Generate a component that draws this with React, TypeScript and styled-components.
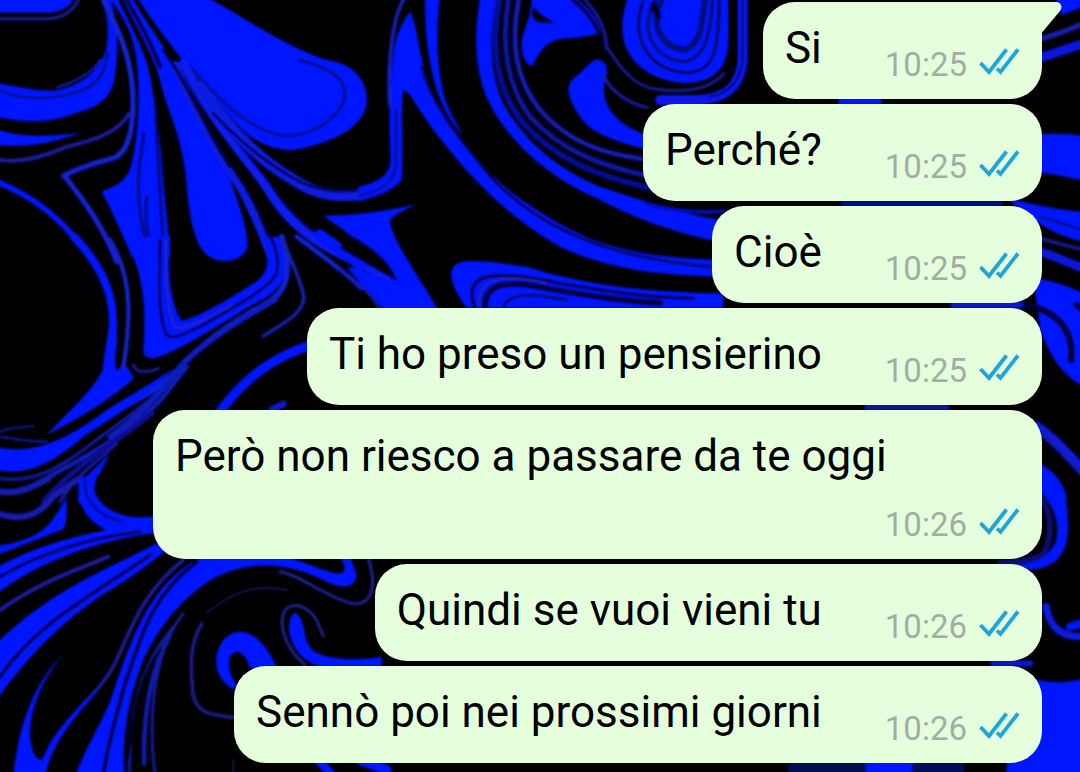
import React from 'react';
import styled, { createGlobalStyle } from 'styled-components';

const GlobalStyle = createGlobalStyle`
  * { box-sizing: border-box; }
  body { margin: 0; background: #000; font-family: Roboto, "Liberation Sans", sans-serif; }
`;

const Screen = styled.main`
  display: grid;
  grid-template-columns: minmax(0, 1fr);
  min-height: 100vh;
  overflow: hidden;
`;

const Art = styled.svg`
  grid-area: 1 / 1;
  width: 100%;
  height: 100%;
  display: block;
`;

const Messages = styled.ol`
  grid-area: 1 / 1;
  z-index: 1;
  margin: 0;
  padding: 2px 38px 8px 153px;
  list-style: none;
  display: flex;
  flex-direction: column;
  align-items: flex-end;
  gap: 5px;
`;

const Bubble = styled.li<{ $tail?: boolean }>`
  position: relative;
  display: flex;
  flex-wrap: wrap;
  align-items: flex-end;
  column-gap: 63px;
  max-width: 100%;
  padding: 20px 22px 8px 22px;
  border-radius: 32px;
  border-top-right-radius: ${(p) => (p.$tail ? '0' : '32px')};
  background: #e5ffdc;
`;

const Tail = styled.svg`
  position: absolute;
  top: 0;
  left: calc(100% - 1px);
  width: 21px;
  height: 31px;
`;

const Text = styled.p`
  margin: 0;
  padding-bottom: 17px;
  color: #000;
  font-size: 44px;
  line-height: 52px;
`;

const Meta = styled.div`
  display: flex;
  align-items: center;
  gap: 11px;
  height: 52px;
  margin-left: auto;
`;

const Time = styled.time`
  color: #a3aca5;
  font-size: 33px;
  line-height: 52px;
`;

const Ticks = styled.svg`
  width: 42px;
  height: 30px;
  margin-bottom: 8px;
`;

const BLUE = '#0318ff';
const DIM = '#1a1c9e';

type Mark = [d: string, width?: number, color?: string];

/* A mark without a width is a filled shape; with a width it is a strand. */
const Marks = ({ x, y, marks }: { x: number; y: number; marks: Mark[] }) => (
  <g transform={`translate(${x} ${y}) scale(0.33333)`}>
    {marks.map(([d, width, color = BLUE], i) =>
      width ? (
        <path key={i} d={d} fill="none" stroke={color} strokeWidth={width} strokeLinecap="round" />
      ) : (
        <path key={i} d={d} fill={color} />
      ),
    )}
  </g>
);

const topLeft: Mark[] = [
  ['M-20 -20H225C222 14 190 36 150 38H-20Z'],
  ['M0 56H130C180 58 215 40 235 0', 9, DIM],
  ['M-10 248C60 262 110 272 160 272C240 262 295 215 318 150C330 90 322 40 300 -10H330C352 60 357 150 345 230C335 290 300 320 240 335C160 368 80 372 -10 350Z'],
  ['M0 272C70 306 190 300 265 262C300 240 318 205 322 160', 8, '#000a70'],
  ['M170 262C230 245 280 215 300 180', 7, DIM],
  ['M-10 388C70 415 150 408 240 398C170 425 90 445 -10 434Z'],
  ['M0 480C60 488 120 475 200 440C300 418 360 390 388 340', 12, DIM],
  ['M-10 545C100 590 185 650 285 790', 17],
  ['M350 785C315 690 260 610 192 527C250 495 310 485 350 470C398 440 402 350 398 270C390 160 355 90 310 0', 16, '#1220d0'],
  ['M325 -10C380 60 405 120 412 200C420 300 415 400 395 490C385 530 370 550 305 575C340 640 370 710 395 770H512C506 700 490 560 482 450C470 350 455 220 435 170C410 110 380 50 350 -10Z'],
  ['M432 400C415 500 400 600 445 750M440 590C435 640 440 700 460 770M468 330C470 480 488 640 492 800', 8, '#00064a'],
  ['M365 -10H395C450 90 520 170 560 260C600 360 650 450 690 540C720 620 745 690 742 745C720 795 635 800 600 740C560 660 565 560 550 480C530 370 500 330 480 240C465 180 420 100 365 -10Z'],
  ['M375 -10C430 90 455 130 480 200', 12, '#000'],
  ['M410 -10H620C760 70 860 140 980 180C1060 190 1101 240 1101 300C1098 380 1000 430 880 450C800 450 745 412 700 360C620 265 520 160 410 -10Z'],
  ['M560 190C640 275 720 380 850 408C940 408 1030 350 1035 280C1030 230 990 205 900 180', 9, '#000a80'],
  ['M525 195C590 340 660 480 720 560C765 640 790 710 812 770', 24, '#0d1be0'],
  ['M545 210C610 350 670 470 735 560C780 640 808 700 828 760', 6, '#000430'],
  ['M550 190C640 370 730 460 800 560C850 650 930 730 1085 790L1230 870L1290 950', 28, '#0b1af0'],
  ['M600 270C680 400 760 480 810 550C870 650 950 710 1085 790', 6, '#000550'],
  ['M600 260C700 410 800 495 890 545C960 590 1020 590 1090 582', 34, '#0f1be0'],
  ['M640 340C740 450 850 520 900 545C980 580 1040 575 1090 570', 8, '#00033a'],
  ['M490 150C570 260 610 380 690 500', 9, '#00021c'],
];

const topMiddle: Mark[] = [
  ['M150 35C168 60 175 150 200 230C230 330 290 400 350 480C430 570 560 660 700 720C850 770 950 775 1090 780V830C900 825 750 810 600 740C480 670 400 600 310 500C240 420 190 350 150 285L130 268C120 350 132 450 125 540C90 580 40 590 -5 605V560C50 548 88 530 92 480C86 380 85 250 105 130Q120 70 150 35Z'],
  ['M135 -10C85 70 84 250 90 320', 11, '#1723c0'],
  ['M0 588C60 570 105 550 108 490V330', 7, '#000a78'],
  ['M195 -10H240C225 100 232 200 252 290C270 340 290 370 310 405C240 340 192 200 195 -10Z'],
  ['M185 200C220 330 320 440 400 540C520 660 700 770 1050 800', 8, '#00053a'],
  ['M360 -10H410C385 120 390 230 435 320C500 430 600 510 720 560C850 600 950 640 1090 660V728C900 690 800 640 700 590C540 520 400 380 365 250C343 170 345 80 360 -10Z'],
  ['M418 0C392 140 410 270 490 370C580 470 700 530 900 570', 18, '#000c98'],
  ['M445 0C420 150 445 260 510 350C600 450 720 500 900 535', 15, '#0c17a8'],
  ['M476 0C450 140 470 240 540 330C620 420 720 465 880 480', 14, '#131db8'],
  ['M460 0C437 150 455 250 525 340C610 435 720 485 880 508', 5, '#000'],
  ['M515 -10C515 60 482 100 486 130C480 165 500 195 515 200C540 150 565 122 600 117C660 112 700 105 725 98C715 60 690 20 640 -10Z'],
  ['M522 20C535 38 560 55 590 70L535 68C515 55 510 40 522 20Z', undefined, '#000'],
  ['M640 0C690 40 720 90 735 150', 12, '#00052a'],
  ['M675 0C715 40 738 90 740 140C790 220 830 260 890 268C970 278 1050 270 1092 220', 9, DIM],
  ['M710 178C740 180 750 210 735 240C720 300 755 370 860 405V448C770 425 690 400 660 350C620 290 608 250 660 220Q690 185 710 178Z'],
  ['M730 225C750 270 800 310 860 322', 10, DIM],
  ['M805 -10C750 130 820 238 980 250C1070 245 1105 195 1105 120V-10Z'],
  ['M850 0C810 110 860 210 980 218C1060 215 1075 160 1078 0', 9, '#00063a'],
  ['M885 0C835 90 880 175 970 185C1035 175 1050 110 1058 0', 9, '#000747'],
  ['M905 0C865 80 910 140 970 150C1020 140 1025 80 1035 0', 18, '#000c70'],
  ['M880 15L895 50', 18, '#00021a'],
  ['M918 -10C905 70 935 118 965 115C1000 105 1010 60 1015 -10Z'],
  ['M1148 0V180C1140 265 1090 300 1000 300H900', 30, '#0818f0'],
  ['M1148 0V180C1140 240 1110 280 1050 290', 6, '#000a70'],
  ['M-110 648C-50 645 60 640 165 612C125 640 88 645 90 670C110 740 170 820 235 930H70C40 890 0 850 -40 800C0 800 50 830 100 850C60 780 0 720 -110 648Z'],
  ['M-40 700C40 740 95 790 110 842C60 815 0 780 -60 745Z', undefined, '#000'],
  ['M-60 810C0 850 40 890 60 930', 8, '#151fa8'],
  ['M280 800C300 770 400 785 500 800C650 845 800 875 1090 880V925H320C290 880 260 830 280 800Z'],
  ['M345 925C310 830 370 800 600 850C750 875 850 892 1000 895', 10, '#00022a'],
  ['M375 925C370 845 450 840 560 865C700 890 800 905 900 908', 18, '#000330'],
  ['M360 925C345 830 430 820 560 848', 5, '#2a2a98'],
  ['M430 925C440 875 520 880 620 900', 7, '#00021c'],
  ['M860 610C930 630 1010 640 1090 634', 12, '#000bb8'],
];

const middleLeft: Mark[] = [
  ['M370 -10H512C498 100 515 200 545 242C600 230 700 170 775 120Q822 80 790 -10H835C872 70 862 130 800 172C700 222 600 300 480 350Q428 365 430 330C440 200 430 90 370 -10Z'],
  ['M480 0C480 120 470 220 500 285C520 300 560 280 610 255C700 200 800 150 828 105C840 70 830 30 812 -10', 9, '#00063a'],
  ['M498 0C495 120 500 215 525 262C560 270 620 235 700 195', 5, '#2b2b9a'],
  ['M0 715C100 730 180 685 290 600C370 540 430 500 480 450L560 360', 10, '#1219a0'],
  ['M0 752C80 765 140 710 220 670C330 610 430 540 490 470L560 380', 14, '#101bb8'],
  ['M130 785C230 670 360 600 455 520', 16, '#0a1190'],
  ['M845 -10C880 100 860 160 790 195C690 250 610 310 550 370C500 430 450 460 370 500', 17, '#1020d8'],
  ['M825 180C720 240 620 300 540 380C480 460 430 520 330 590', 16, '#101bc0'],
  ['M222 -10C325 100 350 190 336 310', 24],
  ['M336 300L324 385', 32],
  ['M348 230C352 300 340 350 350 395L372 365L402 415C360 455 270 520 140 585C210 510 280 450 308 390C320 340 322 280 330 230Z'],
  ['M330 0C385 90 400 200 370 380', 13, '#1320c8'],
  ['M400 375C410 400 440 400 475 385', 9, DIM],
  ['M-10 622C100 645 200 600 320 510C400 460 440 440 520 385C440 475 340 530 250 590C170 660 90 710 -10 690Z'],
  ['M0 575C30 560 60 565 100 558M0 590C50 600 90 605 140 605', 8, '#10158a'],
  ['M180 785C240 690 300 660 350 610', 10, '#1219a0'],
  ['M235 790C230 730 260 710 330 640L300 700C270 730 275 760 285 790Z'],
  ['M890 -10C970 50 1030 90 1085 145', 14, '#1020d8'],
  ['M960 -15L1085 75', 34],
  ['M925 318C810 355 725 425 660 515', 28],
  ['M790 288C850 250 905 225 912 175C905 120 870 60 850 0', 11, '#1920a8'],
  ['M815 510L850 492', 20, '#0c18d0'],
];

const bottomLeft: Mark[] = [
  ['M238 -10C222 80 270 130 330 155L465 145V108C380 125 300 90 282 30L290 -10Z'],
  ['M255 0C250 60 290 110 370 125', 8, '#000a80'],
  ['M198 50C203 90 200 135 190 148C130 170 60 200 -10 225V198C60 190 120 165 148 130C165 110 180 90 198 50Z'],
  ['M0 102C80 130 130 90 160 50L230 0', 18, '#141db0'],
  ['M0 40C60 50 110 20 150 0', 9, DIM],
  ['M-10 262C120 190 280 150 470 125V158C300 180 120 240 -10 342Z'],
  ['M0 290C120 220 260 175 420 155', 10, '#000640'],
  ['M0 390C120 305 220 275 325 230', 12, '#201fa0'],
  ['M470 190C330 265 150 330 -10 490V660C60 560 170 430 330 330C400 290 450 250 500 210Z'],
  ['M0 590C110 430 270 350 450 225', 11, '#000538'],
  ['M610 228C440 310 390 500 345 620C320 710 260 790 225 890H372C365 760 390 640 430 540C480 430 560 340 650 290C760 240 850 250 950 290C1020 330 1065 330 1070 285L1050 228H1015C1045 260 1040 290 1000 278C940 262 900 240 850 228Z'],
  ['M590 245C440 360 420 490 375 610C350 710 320 800 310 885', 12, '#00022c'],
  ['M550 240C420 340 385 470 345 550C300 640 215 690 150 800', 11, '#1a1d98'],
  ['M520 440C420 560 385 700 390 880', 9, '#141c9c'],
  ['M510 465C440 590 430 740 432 850', 14, '#101bb0'],
  ['M550 400C455 520 445 730 465 880', 9, '#171c98'],
  ['M480 510C400 620 400 740 375 880', 9, '#00021c'],
  ['M1105 235C1135 330 1110 385 1045 368C960 340 900 285 840 275', 9, '#202098'],
  ['M620 400C690 340 760 310 860 330', 7, '#0c0c48'],
  ['M700 630C640 590 635 530 670 480C715 430 785 455 832 565H750C738 520 708 500 690 530C680 560 695 595 710 615Z'],
  ['M885 398C925 420 900 490 950 518C1000 540 1080 542 1145 530V560H960C900 545 860 480 868 430Q872 400 885 398Z'],
  ['M915 555C860 510 835 440 852 395C880 360 925 380 950 420L970 468', 9, '#202090'],
  ['M40 890C50 780 75 700 108 635C130 590 160 550 195 515C130 590 92 680 90 760Q95 840 125 840C160 760 220 690 300 625C240 700 160 770 135 890Z'],
  ['M605 430C560 510 575 590 580 650C600 710 640 700 710 715', 11, '#1c1c88'],
  ['M700 840V885', 6, '#281450'],
  ['M955 840L1000 890', 26],
  ['M1080 840L1160 870', 30],
];

const topRight: Mark[] = [
  ['M165 -10H250V20C215 32 190 45 185 45Z'],
  ['M125 115C170 105 205 88 250 72', 16, '#1820a8'],
  ['M120 172C160 162 200 145 250 132', 28, '#0a18e0'],
  ['M100 405Q180 395 250 408V542C190 530 160 518 100 518Z'],
  ['M20 595C140 622 200 632 250 635V725C180 708 140 690 80 640Z'],
  ['M120 650C160 660 200 675 250 690', 7, '#000a78'],
  ['M120 715C160 725 200 740 250 748', 12, '#16168a'],
  ['M120 755C170 770 210 790 250 805', 26, '#0a18d8'],
  ['M100 835C150 838 210 860 250 880V1160C180 1120 145 1060 120 985Z'],
  ['M0 910C130 905 225 960 213 1080', 20, '#000433'],
  ['M230 915L250 930', 20, '#000640'],
  ['M-475 304H-365', 22],
  ['M-470 610H0', 16, '#000d90'],
  ['M-140 915H60', 20, '#0714d0'],
  ['M-400 1222H-160', 16, '#0a15a8'],
];

const bottomRight: Mark[] = [
  ['M110 140C160 175 200 220 250 275', 32, '#0d1ae0'],
  ['M110 150C160 185 200 230 250 290', 6, '#1a1a80'],
  ['M205 -20Q220 5 250 12V-20Z'],
  ['M110 250C160 260 205 330 198 360C210 440 205 490 185 520C150 580 70 570 -10 570V555C100 560 150 530 168 480C180 430 165 380 110 320Z'],
  ['M120 350C160 400 155 480 130 520C100 545 40 545 0 548', 18, '#090d70'],
  ['M138 680C150 745 185 772 250 770', 22, '#101ee0'],
  ['M210 740L250 728', 24],
  ['M-20 850H90', 20, '#0715c8'],
  ['M90 895Q180 918 250 895V1190H20V1130H90Z'],
  ['M-390 1165H-270', 60],
  ['M-240 1165H-130', 50, '#050a58'],
  ['M-620 1165H-420', 40, '#040850'],
];

const Wallpaper = () => (
  <Art viewBox="0 0 1080 772" preserveAspectRatio="xMidYMin slice" aria-hidden="true">
    <defs>
      <filter id="soften" x="0" y="0" width="100%" height="100%">
        <feGaussianBlur stdDeviation="1.2" />
      </filter>
    </defs>
    <rect width="1080" height="772" fill="#000" />
    <g filter="url(#soften)">
      <Marks x={0} y={0} marks={topLeft} />
      <Marks x={0} y={240} marks={middleLeft} />
      <Marks x={0} y={480} marks={bottomLeft} />
      <Marks x={360} y={0} marks={topMiddle} />
      <Marks x={1000} y={0} marks={topRight} />
      <Marks x={1000} y={380} marks={bottomRight} />
    </g>
  </Art>
);

const messages = [
  { text: 'Si', time: '10:25' },
  { text: 'Perché?', time: '10:25' },
  { text: 'Cioè', time: '10:25' },
  { text: 'Ti ho preso un pensierino', time: '10:25' },
  { text: 'Però non riesco a passare da te oggi', time: '10:26' },
  { text: 'Quindi se vuoi vieni tu', time: '10:26' },
  { text: 'Sennò poi nei prossimi giorni', time: '10:26' },
];

export default function App() {
  return (
    <>
      <GlobalStyle />
      <Screen>
        <Wallpaper />
        <Messages>
          {messages.map((m, i) => (
            <Bubble key={m.text} $tail={i === 0}>
              {i === 0 && (
                <Tail viewBox="0 0 21 31" aria-hidden="true">
                  <path d="M0 0H15C20 0 22 5 19 9L1 30.500H0Z" fill="#e5ffdc" />
                </Tail>
              )}
              <Text>{m.text}</Text>
              <Meta>
                <Time>{m.time}</Time>
                <Ticks viewBox="0 0 42 30" role="img" aria-label="Letto">
                  <path
                    d="M2.500 17L11 26L28.500 3.500M19 22.500L22.500 26L40 3.500"
                    fill="none"
                    stroke="#1ba6e0"
                    strokeWidth="3.8"
                  />
                </Ticks>
              </Meta>
            </Bubble>
          ))}
        </Messages>
      </Screen>
    </>
  );
}
